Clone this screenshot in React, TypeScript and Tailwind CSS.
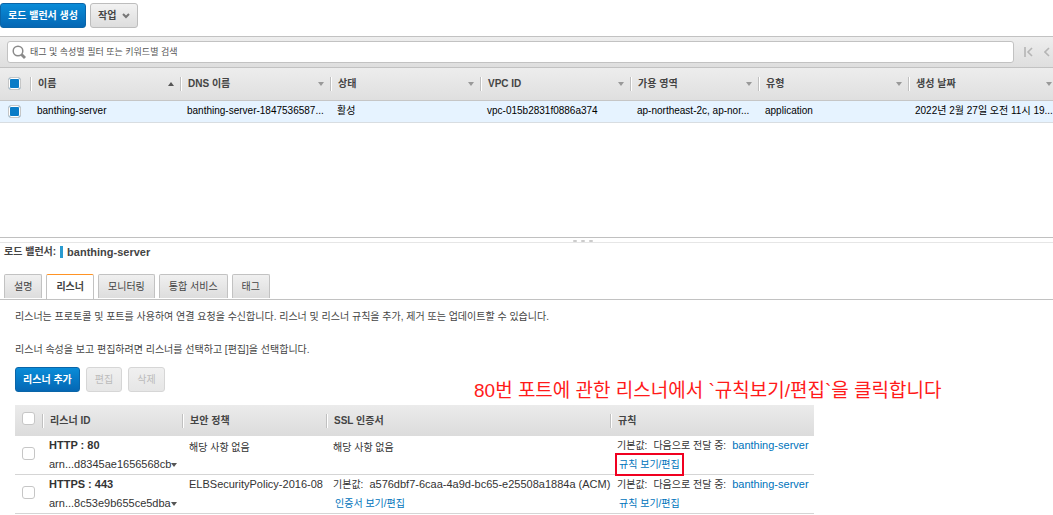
import { useState, type ReactNode } from "react";

type Column = {
  label: string;
  value: string;
  width: string;
  sorted?: boolean;
};

type Listener = {
  id: string;
  arn: string;
  policy: string;
  certificate: string | null;
  marked?: boolean;
};

const columns: Column[] = [
  { label: "이름", value: "banthing-server", width: "w-[150px]", sorted: true },
  { label: "DNS 이름", value: "banthing-server-1847536587...", width: "w-[150px]" },
  { label: "상태", value: "활성", width: "w-[150px]" },
  { label: "VPC ID", value: "vpc-015b2831f0886a374", width: "w-[150px]" },
  { label: "가용 영역", value: "ap-northeast-2c, ap-nor...", width: "w-[128px]" },
  { label: "유형", value: "application", width: "w-[150px]" },
  { label: "생성 날짜", value: "2022년 2월 27일 오전 11시 19...", width: "w-[150px]" }
];

const tabs = ["설명", "리스너", "모니터링", "통합 서비스", "태그"];

const listeners: Listener[] = [
  { id: "HTTP : 80", arn: "arn...d8345ae1656568cb", policy: "해당 사항 없음", certificate: null, marked: true },
  {
    id: "HTTPS : 443",
    arn: "arn...8c53e9b655ce5dba",
    policy: "ELBSecurityPolicy-2016-08",
    certificate: "a576dbf7-6caa-4a9d-bc65-e25508a1884a (ACM)"
  }
];

function joinClasses(...classes: Array<string | false | undefined>) {
  return classes.filter(Boolean).join(" ");
}

function Caret({ up = false, className }: { up?: boolean; className?: string }) {
  return (
    <svg viewBox="0 0 6 4" className={joinClasses("h-1 w-1.5 shrink-0", className)} aria-hidden="true">
      <path d={up ? "M0 4 3 0l3 4z" : "M0 0h6L3 4z"} fill="currentColor" />
    </svg>
  );
}

function Checkbox({ label, defaultChecked = false }: { label: string; defaultChecked?: boolean }) {
  return (
    <input
      type="checkbox"
      aria-label={label}
      defaultChecked={defaultChecked}
      className="block h-[13px] w-[13px] appearance-none rounded-[3px] border border-[#c6c6c6] bg-white checked:bg-[#0a7cc7] checked:shadow-[inset_0_0_0_1px_#fff]"
    />
  );
}

function Divider() {
  return <span className="h-3.5 w-0.5 shrink-0 border-l border-[#c0c0c0] bg-white" />;
}

function Button({ children, kind = "plain" }: { children: ReactNode; kind?: "primary" | "plain" | "disabled" }) {
  return (
    <button
      type="button"
      disabled={kind === "disabled"}
      className={joinClasses(
        "flex h-[25px] items-center gap-1.5 rounded-[3px] border text-[10px] leading-4 whitespace-nowrap",
        kind === "primary" && "border-[#0a65a8] bg-linear-to-b from-[#0a8cd8] to-[#0567b4] px-[7px] font-bold text-white",
        kind === "plain" && "border-[#bdbdbd] bg-linear-to-b from-[#f2f2f2] to-[#dddddd] px-[7px] font-bold text-[#444]",
        kind === "disabled" && "border-[#d6d6d6] bg-linear-to-b from-[#f0f0f0] to-[#e6e6e6] px-2 text-[#bbb]"
      )}
    >
      {children}
    </button>
  );
}

function ActionLink({ children, marked }: { children: ReactNode; marked?: boolean }) {
  return (
    <a
      href="#"
      className={joinClasses("block w-fit px-0.5 text-[#0073bb]", marked && "outline-2 outline-[#f00020]")}
    >
      {children}
    </a>
  );
}

function LoadBalancerTable() {
  return (
    <div className="h-[169px] overflow-hidden">
      <table className="w-[1058px] table-fixed border-collapse text-[10px] leading-4 whitespace-nowrap">
        <thead className="bg-linear-to-b from-[#ededed] to-[#dfdfdf]">
          <tr className="h-8 border-b border-[#c6c6c6]">
            <th className="w-[30px] p-0 pl-2">
              <Checkbox label="모두 선택" defaultChecked />
            </th>
            {columns.map((column) => (
              <th key={column.label} className={joinClasses("p-0 text-left font-bold text-[#444]", column.width)}>
                <div className="flex items-center gap-1.5 pr-1.5">
                  <Divider />
                  <span className="flex-1">{column.label}</span>
                  <Caret up={column.sorted} className={column.sorted ? "text-[#555]" : "text-[#999]"} />
                </div>
              </th>
            ))}
          </tr>
        </thead>
        <tbody>
          <tr className="h-[22px] border-b border-[#d8dde1] bg-[#e6f3ff] text-black">
            <td className="p-0 pl-2">
              <Checkbox label="banthing-server" defaultChecked />
            </td>
            {columns.map((column) => (
              <td key={column.label} className="p-0 pl-[7px]">
                {column.value}
              </td>
            ))}
          </tr>
        </tbody>
      </table>
    </div>
  );
}

function ListenerTable() {
  return (
    <table className="w-[799px] table-fixed border-separate border-spacing-0 text-[10px] leading-[19px] whitespace-nowrap text-[#333]">
      <thead className="bg-linear-to-b from-[#ebebeb] to-[#dcdcdc]">
        <tr className="h-[31px]">
          <th className="w-[27px] p-0 pb-1 pl-[7px]">
            <Checkbox label="모든 리스너 선택" />
          </th>
          {[
            ["리스너 ID", "w-[140px]"],
            ["보안 정책", "w-[144px]"],
            ["SSL 인증서", "w-[284px]"],
            ["규칙", "w-[204px]"]
          ].map(([label, width]) => (
            <th key={label} className={joinClasses("p-0 text-left font-bold text-[#444]", width)}>
              <div className="flex items-center gap-1.5">
                <Divider />
                {label}
              </div>
            </th>
          ))}
        </tr>
      </thead>
      <tbody>
        {listeners.map((listener) => (
          <tr key={listener.id} className="align-top *:border-b *:border-[#d5d5d5]">
            <td className="p-0 pb-1 pl-[7px] align-middle">
              <Checkbox label={listener.id} />
            </td>
            <td className="p-0 pl-[7px] text-[11px]">
              <strong className="block">{listener.id}</strong>
              <button type="button" className="flex items-center">
                {listener.arn}
                <Caret className="text-[#555]" />
              </button>
            </td>
            <td className={joinClasses("p-0 pl-[7px]", listener.certificate ? "text-[11px]" : "pt-0.5")}>
              {listener.policy}
            </td>
            {listener.certificate ? (
              <td className="p-0 pl-[7px]">
                <div className="flex h-[19px] items-center gap-1.5">
                  <span>기본값:</span>
                  <span className="text-[11px]">{listener.certificate}</span>
                </div>
                <ActionLink>인증서 보기/편집</ActionLink>
              </td>
            ) : (
              <td className="p-0 pt-0.5 pl-[7px]">해당 사항 없음</td>
            )}
            <td className="p-0 pl-[7px]">
              <div className="flex h-[19px] items-center gap-1.5">
                <span>기본값:</span>
                <span>다음으로 전달 중:</span>
                <a href="#" className="text-[11px] text-[#0073bb]">
                  banthing-server
                </a>
              </div>
              <ActionLink marked={listener.marked}>규칙 보기/편집</ActionLink>
            </td>
          </tr>
        ))}
      </tbody>
    </table>
  );
}

export default function App() {
  const [activeTab, setActiveTab] = useState("리스너");

  return (
    <div className="min-h-screen overflow-hidden bg-white font-['Liberation_Sans','Noto_Sans_CJK_KR',sans-serif] text-[#444]">
      <div className="flex h-9 gap-1 pt-[3px]">
        <Button kind="primary">로드 밸런서 생성</Button>
        <Button>
          작업
          <svg viewBox="0 0 8 6" className="h-1.5 w-2" aria-hidden="true">
            <path d="M1 1l3 3 3-3" fill="none" stroke="#777" strokeWidth="2" />
          </svg>
        </Button>
      </div>

      <div className="flex h-8 items-center border-y border-[#c2c2c2] bg-linear-to-b from-[#eeeeee] to-[#dedede] pl-[7px]">
        <label className="flex h-[22px] flex-1 items-center gap-1 rounded-[3px] border border-[#c2c2c2] bg-white px-1">
          <svg viewBox="0 0 14 14" className="h-3.5 w-3.5" fill="none" stroke="#8a8a8a" aria-hidden="true">
            <circle cx="6" cy="6" r="4.8" strokeWidth="1.5" />
            <path d="M9.5 9.5l3.5 3.5" strokeWidth="2.8" />
          </svg>
          <input
            type="text"
            aria-label="검색"
            placeholder="태그 및 속성별 필터 또는 키워드별 검색"
            className="min-w-0 flex-1 text-[9px] leading-4 outline-none placeholder:text-[#555]"
          />
        </label>
        <div className="flex w-[39px] items-center justify-between pr-[3px] pl-2.5">
          <button type="button" aria-label="첫 페이지">
            <svg viewBox="0 0 9 10" className="h-2.5 w-[9px]" fill="none" stroke="#b5b5b5" strokeWidth="1.6" aria-hidden="true">
              <path d="M1 0v10M8 1L4 5l4 4" />
            </svg>
          </button>
          <button type="button" aria-label="이전 페이지">
            <svg viewBox="0 0 6 10" className="h-2.5 w-1.5" fill="none" stroke="#b5b5b5" strokeWidth="1.6" aria-hidden="true">
              <path d="M5 1L1 5l4 4" />
            </svg>
          </button>
        </div>
      </div>

      <LoadBalancerTable />

      <div className="flex h-1.5 items-end justify-center gap-1 border-t border-b border-t-[#c0c0c0] border-b-[#e6e6e6] pl-28">
        <span className="h-0.5 w-1 rounded-full bg-[#ccc]" />
        <span className="h-0.5 w-1 rounded-full bg-[#ccc]" />
        <span className="h-0.5 w-1 rounded-full bg-[#ccc]" />
      </div>

      <h2 className="flex items-center gap-1 pt-px pl-1 text-[10px] leading-4 font-bold">
        로드 밸런서:
        <span className="h-3 w-[3px] bg-[#2a9bd0]" />
        <span className="text-[11px]">banthing-server</span>
      </h2>

      <div className="mt-3.5 flex h-[26px] gap-1 border-b border-[#c2c2c2] pl-1">
        {tabs.map((tab) => (
          <button
            key={tab}
            type="button"
            onClick={() => setActiveTab(tab)}
            className={joinClasses(
              "rounded-t-xs border border-b-0 border-[#c2c2c2] px-[9px] text-[10px] leading-4 whitespace-nowrap",
              activeTab === tab
                ? "h-[25px] border-t-[#ff9324] bg-white font-bold"
                : "h-6 bg-linear-to-b from-[#f0f0f0] to-[#dddddd]"
            )}
          >
            {tab}
          </button>
        ))}
      </div>

      <div className="px-[15px] pt-[9px]">
        <p className="text-[10px] leading-4">
          리스너는 프로토콜 및 포트를 사용하여 연결 요청을 수신합니다. 리스너 및 리스너 규칙을 추가, 제거 또는 업데이트할 수 있습니다.
        </p>
        <p className="mt-[17px] text-[10px] leading-4">
          리스너 속성을 보고 편집하려면 리스너를 선택하고 [편집]을 선택합니다.
        </p>
        <div className="relative mt-[9px] mb-[13px] flex gap-1.5">
          <Button kind="primary">리스너 추가</Button>
          <Button kind="disabled">편집</Button>
          <Button kind="disabled">삭제</Button>
          <p className="absolute top-2.5 left-[459px] text-[19px] leading-7 whitespace-nowrap text-[#ff1a1a]">
            80번 포트에 관한 리스너에서 `규칙보기/편집`을 클릭합니다
          </p>
        </div>
        <ListenerTable />
      </div>
    </div>
  );
}
